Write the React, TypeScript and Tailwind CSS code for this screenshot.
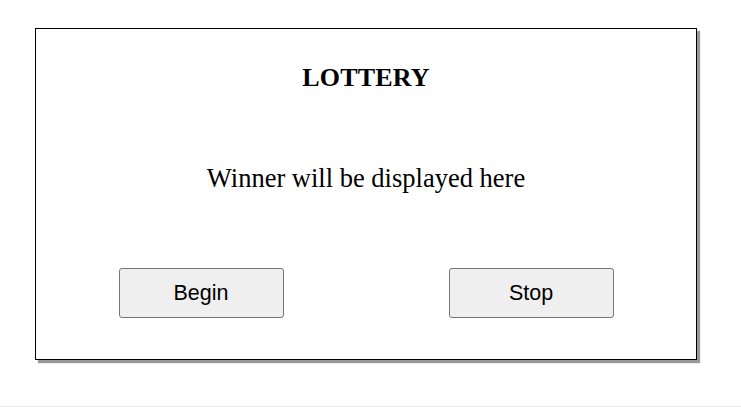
import React from 'react';

const App: React.FC = () => {
  return (
    <div className="w-full h-[407px] bg-white border-b border-[#ececec] overflow-hidden">
      <div className="ml-[35px] mt-[28px] w-[662px] h-[332px] border border-black bg-white shadow-[3px_3px_1px_#9a9a9a] flex flex-col items-center">
        {/* Title */}
        <h1 className="mt-[34px] h-[30px] leading-[30px] text-[26px] tracking-[0.2px] font-bold text-black font-['Liberation_Serif','Times_New_Roman',serif]">
          LOTTERY
        </h1>

        {/* Winner */}
        <p className="mt-[70px] h-[30px] leading-[30px] text-[26.5px] text-black font-['Liberation_Serif','Times_New_Roman',serif]">
          Winner will be displayed here
        </p>

        {/* Buttons */}
        <div className="mt-[75px] w-full flex justify-around">
          <button className="w-[165px] h-[50px] bg-[#efefef] border border-[#767676] rounded-[3px] text-[21.5px] text-black font-['Liberation_Sans',Arial,sans-serif]">
            Begin
          </button>
          <button className="w-[165px] h-[50px] bg-[#efefef] border border-[#767676] rounded-[3px] text-[21.5px] text-black font-['Liberation_Sans',Arial,sans-serif]">
            Stop
          </button>
        </div>
      </div>
    </div>
  );
};

export default App;
